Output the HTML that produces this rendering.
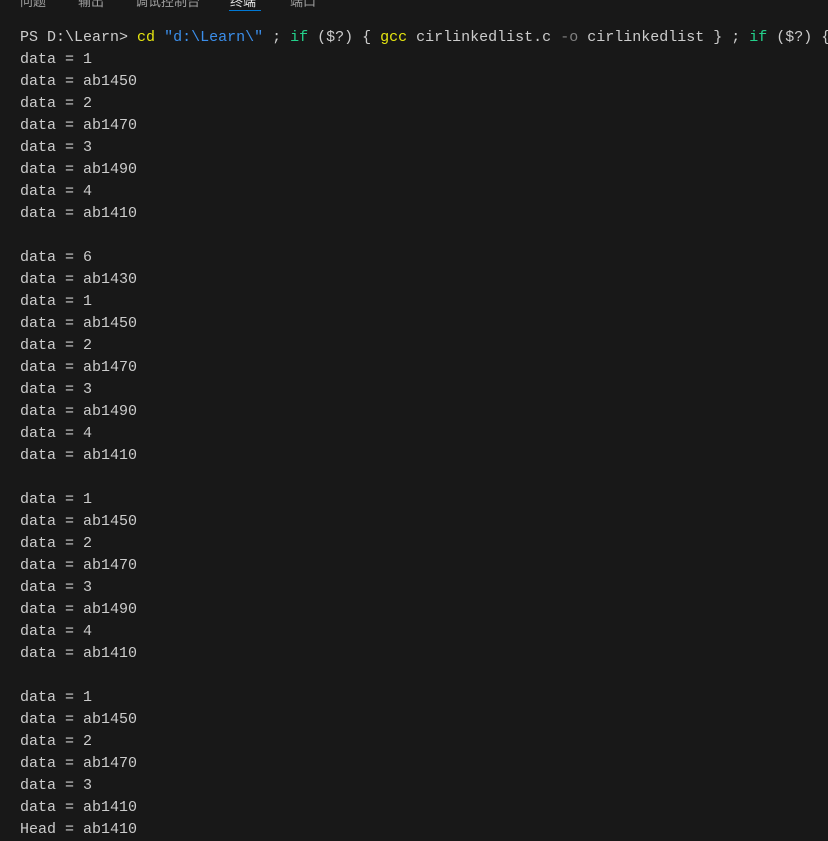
<!DOCTYPE html>
<html><head><meta charset="utf-8"><style>
html,body{margin:0;padding:0;background:#181818;width:828px;height:828px;overflow:hidden}
.tabs{position:absolute;top:-9px;left:0;font:13px "Liberation Sans","Noto Sans CJK SC",sans-serif;color:#9d9d9d}
.tabs span{position:absolute;white-space:nowrap;top:0}
.ul{position:absolute;left:229px;top:10px;width:32px;height:1px;background:#0078d4}
pre{position:absolute;left:20px;top:27px;margin:0;font:15px/22px "Liberation Mono",monospace;color:#cccccc;white-space:pre}
.y{color:#e5e510}.s{color:#3b8eea}.g{color:#23d18b}.d{color:#808080}
</style></head><body>
<div class="tabs"><span style="left:20px">问题</span><span style="left:78px">输出</span><span style="left:135px">调试控制台</span><span style="left:230px;color:#e7e7e7">终端</span><span style="left:290px">端口</span></div>
<div class="ul"></div>
<pre>PS D:\Learn&gt; <span class="y">cd</span> <span class="s">"d:\Learn\"</span> ; <span class="g">if</span> ($?) { <span class="y">gcc</span> cirlinkedlist.c <span class="d">-o</span> cirlinkedlist } ; <span class="g">if</span> ($?) {
data = 1
data = ab1450
data = 2
data = ab1470
data = 3
data = ab1490
data = 4
data = ab1410

data = 6
data = ab1430
data = 1
data = ab1450
data = 2
data = ab1470
data = 3
data = ab1490
data = 4
data = ab1410

data = 1
data = ab1450
data = 2
data = ab1470
data = 3
data = ab1490
data = 4
data = ab1410

data = 1
data = ab1450
data = 2
data = ab1470
data = 3
data = ab1410
Head = ab1410</pre>
</body></html>
